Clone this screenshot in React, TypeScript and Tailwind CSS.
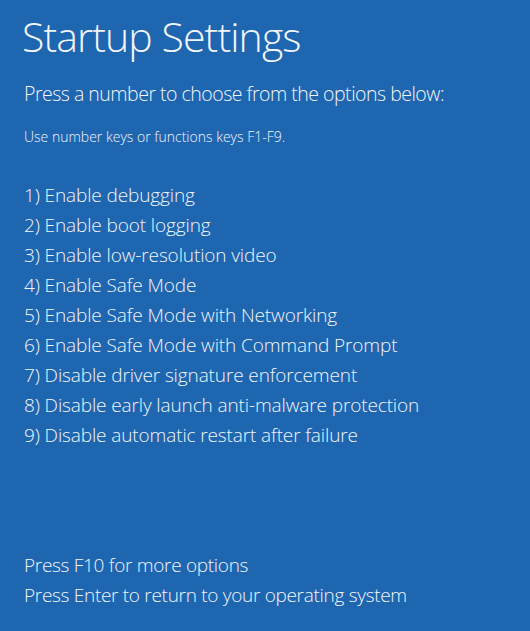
const options = [
  "1) Enable debugging",
  "2) Enable boot logging",
  "3) Enable low-resolution video",
  "4) Enable Safe Mode",
  "5) Enable Safe Mode with Networking",
  "6) Enable Safe Mode with Command Prompt",
  "7) Disable driver signature enforcement",
  "8) Disable early launch anti-malware protection",
  "9) Disable automatic restart after failure",
];

export default function App() {
  return (
    <div
      className="h-[631px] w-[530px] overflow-hidden bg-[#1f66b1] text-[#f2f5fa]"
      style={{ fontFamily: '"Open Sans", "Noto Sans", sans-serif' }}
    >
      <div className="pl-6 pt-[11px]">
        <h1 className="-ml-[2px] text-[41px] leading-[50px] font-light tracking-[-0.9px]">
          Startup Settings
        </h1>
        <p className="mt-[18px] text-[19.5px] leading-[30px] font-light tracking-[-0.5px]">
          Press a number to choose from the options below:
        </p>
        <p className="mt-[18px] text-[14px] leading-[20px] font-light">
          Use number keys or functions keys F1-F9.
        </p>
        <ul className="mt-[33px]">
          {options.map((o) => (
            <li key={o} className="text-[19px] leading-[30px] font-light tracking-[-0.12px]">
              {o}
            </li>
          ))}
        </ul>
        <div className="mt-[100px] text-[19px] leading-[30px] font-light tracking-[-0.3px]">
          <p>Press F10 for more options</p>
          <p>Press Enter to return to your operating system</p>
        </div>
      </div>
    </div>
  );
}
